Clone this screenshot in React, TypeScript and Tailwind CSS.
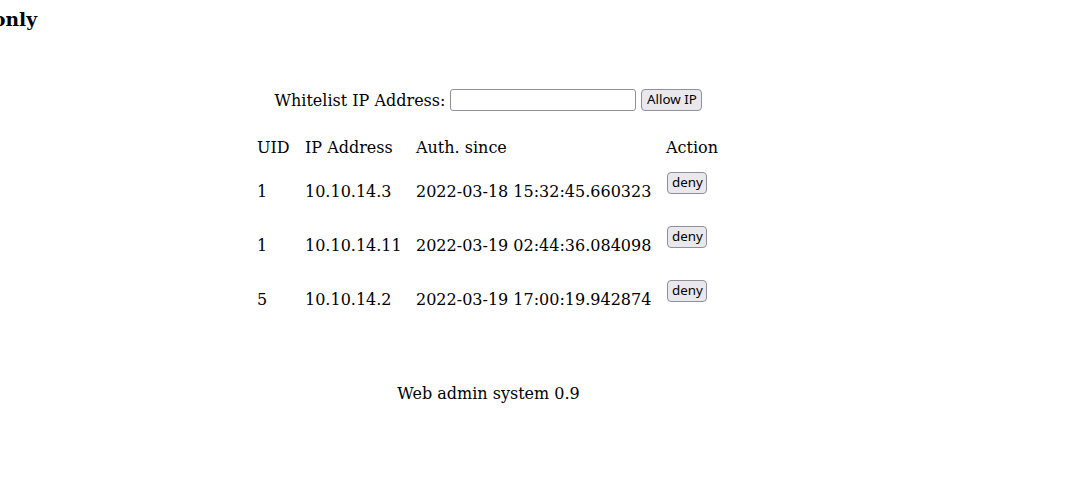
import { useState } from 'react'

interface AuthEntry {
  uid: number
  ip: string
  since: string
}

const entries: AuthEntry[] = [
  { uid: 1, ip: '10.10.14.3', since: '2022-03-18 15:32:45.660323' },
  { uid: 1, ip: '10.10.14.11', since: '2022-03-19 02:44:36.084098' },
  { uid: 5, ip: '10.10.14.2', since: '2022-03-19 17:00:19.942874' },
]

const btnClass =
  "h-[22px] px-[4px] rounded-[4px] border border-[#8f8f9d] bg-[#e9e9ed] text-[13.33px] leading-none text-black font-['Noto_Sans',sans-serif]"

export default function App() {
  const [ip, setIp] = useState('')

  return (
    <div className="min-h-[480px] bg-white text-black text-[16px] font-['DejaVu_Serif',serif]">
      {/* heading sits mostly off the left edge */}
      <div className="mt-[8px] w-[37px] h-[22px] flex justify-end whitespace-nowrap">
        <h3 className="text-[18.72px] leading-[22px] font-bold">Admins only</h3>
      </div>

      <div className="w-[975px] flex flex-col items-center">
        {/* Whitelist form */}
        <form
          className="mt-[59px] ml-[2px] h-[22px] flex items-center"
          onSubmit={(e) => e.preventDefault()}
        >
          <label className="leading-[19px] mr-[5px]">Whitelist IP Address:</label>
          <input
            value={ip}
            onChange={(e) => setIp(e.target.value)}
            className="w-[186px] h-[22px] border border-[#8f8f9d] rounded-[3px] bg-white px-[2px] text-[13.33px] outline-none"
          />
          <button type="submit" className={`${btnClass} ml-[5px] w-[61px]`}>
            Allow IP
          </button>
        </form>

        {/* Auth table */}
        <div className="mt-[27px] w-[461px] grid grid-cols-[48px_111px_250px_52px] leading-[19px] whitespace-nowrap">
          <div className="h-[34px]">UID</div>
          <div>IP Address</div>
          <div>Auth. since</div>
          <div>Action</div>

          {entries.map((e, i) => (
            <div key={i} className="contents">
              <div className="h-[54px] pt-[10px]">{e.uid}</div>
              <div className="pt-[10px]">{e.ip}</div>
              <div className="pt-[10px]">{e.since}</div>
              <div className="pl-px">
                <button className={`${btnClass} w-[40px]`}>deny</button>
              </div>
            </div>
          ))}
        </div>

        <div className="mt-[50px] ml-[2px] leading-[19px]">Web admin system 0.9</div>
      </div>
    </div>
  )
}
